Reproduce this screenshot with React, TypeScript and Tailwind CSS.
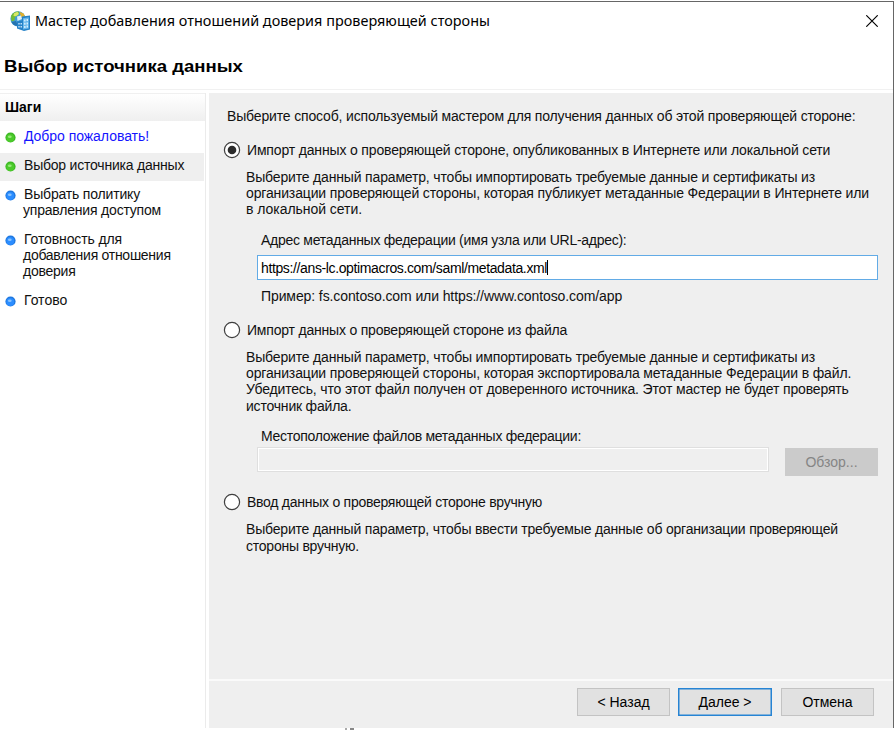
import type { ReactNode } from "react";

function Line({ children, className = "" }: { children: ReactNode; className?: string }) {
  return <div className={`h-4 whitespace-nowrap leading-4 ${className}`}>{children}</div>;
}

function Radio({ checked = false }: { checked?: boolean }) {
  return (
    <svg className="block h-[18px] w-[18px] shrink-0" viewBox="0 0 18 18">
      <circle cx="9" cy="9" r="7.6" fill="#fff" stroke="#3f3f3f" strokeWidth="1.2" />
      {checked && <circle cx="9" cy="9" r="4.3" fill="#2b2b2b" />}
    </svg>
  );
}

function Option({ checked, children, className = "" }: { checked?: boolean; children: ReactNode; className?: string }) {
  return (
    <div className="flex h-[18px] items-center gap-[6px]">
      <Radio checked={checked} />
      <Line className={className}>{children}</Line>
    </div>
  );
}

function Dot({ green = false }: { green?: boolean }) {
  return (
    <svg className="mt-1 block h-[11px] w-[11px] shrink-0" viewBox="0 0 11 11">
      <circle cx="5.5" cy="5.5" r="5.1" fill={green ? "#3cb824" : "#1f78e0"} />
      <circle cx="5.3" cy="6" r="3.9" fill={green ? "#4ccb2b" : "#2b8dff"} />
      <ellipse cx="4.8" cy="4.8" rx="1.9" ry="1.3" fill={green ? "#97e97c" : "#86c2ff"} />
    </svg>
  );
}

function Step({ green, children, className = "" }: { green?: boolean; children: ReactNode; className?: string }) {
  return (
    <div className={`flex gap-2 pl-[5px] ${className}`}>
      <Dot green={green} />
      <div>{children}</div>
    </div>
  );
}

function AppIcon() {
  return (
    <svg className="block h-5 w-5" viewBox="0 0 20 20">
      <circle cx="8" cy="7.8" r="7.6" fill="#3f9bd8" />
      <path d="M1 5C2.5 1.6 6 0 9 .5L8.5 4 5 6 4.5 9.5 1.5 10.5Z" fill="#73bb35" />
      <path d="M4 2.2 7.5.8 9 3 6 5.2 3.5 5Z" fill="#d8e866" />
      <path d="M9.5 .8 13.5 2.5 15.5 6H11Z" fill="#e3b12b" />
      <path d="M7 5.5 11 4.5 12 8 7.5 10Z" fill="#d9f0fb" />
      <path d="M1.5 11 6 10 8 15C5 15 2.8 13.5 1.5 11Z" fill="#2673af" />
      <path d="M12 5.5 20 4.5V18.5L14 20 7 17.5V10.5L12 9.5Z" fill="#2582c8" />
      <path d="M13 7.2 18.8 6.2V17.4L13 18.4Z" fill="#69b8ec" />
      <path d="M14.2 8.5h1.3v2h-1.3zM16.6 8.1h1.3v2h-1.3zM14.2 11.7h1.3v2h-1.3zM16.6 11.4h1.3v2h-1.3zM14.2 15h1.3v2h-1.3zM16.6 14.6h1.3v2h-1.3zM8.4 12h1.2v1.6H8.4zM10.6 12h1.2v1.6h-1.2zM8.4 15h1.2v1.6H8.4zM10.6 15h1.2v1.6h-1.2z" fill="#e4f5ff" />
    </svg>
  );
}

export default function App() {
  return (
    <div className="flex h-[730px] w-[894px] flex-col overflow-hidden bg-white pt-px font-['Liberation_Sans',Arial,sans-serif] text-[14px] text-[#111]">
      <div className="flex h-[727px] flex-col border-t border-r border-[#666]">
        <header className="h-[91px] shrink-0">
          <div className="flex h-[37px] items-center justify-between pr-[15px] pl-[10px]">
            <div className="flex items-center gap-[5px]">
              <AppIcon />
              <span className="whitespace-nowrap font-['Noto_Sans','Open_Sans',sans-serif] text-[14.4px] leading-5 tracking-[0.03px] text-black">
                Мастер добавления отношений доверия проверяющей стороны
              </span>
            </div>
            <svg className="block h-3 w-3" viewBox="0 0 12 12" fill="none" stroke="#000" strokeWidth="1.15">
              <path d="M.3.3 11.7 11.7M11.7.3.3 11.7" />
            </svg>
          </div>
          <div className="h-[51px] border-b border-[#f1f1f1] pt-[18px] pl-1">
            <h1 className="inline-block origin-left scale-x-[1.16] whitespace-nowrap text-[16px] leading-5 font-bold text-black">
              Выбор источника данных
            </h1>
          </div>
        </header>

        <div className="flex min-h-0 flex-1">
          <nav className="w-[206px] shrink-0 border-r border-[#ebebeb]">
            <div className="h-7 border-t border-[#f0f0f0] bg-linear-to-b from-white to-[#efefef] pt-[5px] pl-[5px]">
              <Line className="font-bold text-black">Шаги</Line>
            </div>
            <Step green className="h-[32px] pt-[7px] text-[#1414ff]">
              <Line className="tracking-[-0.04px]">Добро пожаловать!</Line>
            </Step>
            <Step green className="h-[28px] w-[204px] bg-[#efefef] pt-1">
              <Line className="tracking-[-0.21px]">Выбор источника данных</Line>
            </Step>
            <Step className="h-[45px] pt-[5px]">
              <Line className="tracking-[-0.178px]">Выбрать политику</Line>
              <Line className="-ml-px tracking-[-0.198px]">управления доступом</Line>
            </Step>
            <Step className="h-[61px] pt-[5px]">
              <Line className="tracking-[-0.117px]">Готовность для</Line>
              <Line className="-ml-px tracking-[-0.27px]">добавления отношения</Line>
              <Line className="-ml-px tracking-[-0.25px]">доверия</Line>
            </Step>
            <Step className="pt-[5px]">
              <Line>Готово</Line>
            </Step>
          </nav>

          <main className="ml-[3px] flex flex-1 flex-col bg-[#efefef]">
            <div className="h-[586px] shrink-0 pl-[14px]">
              <Line className="mt-[15px] ml-[4px] tracking-[-0.16px]">
                Выберите способ, используемый мастером для получения данных об этой проверяющей стороне:
              </Line>
              <div className="h-[17px]" />
              <Option checked className="tracking-[-0.158px]">
                Импорт данных о проверяющей стороне, опубликованных в Интернете или локальной сети
              </Option>
              <div className="mt-[10px] ml-[23px]">
                <Line className="tracking-[-0.167px]">
                  Выберите данный параметр, чтобы импортировать требуемые данные и сертификаты из
                </Line>
                <Line className="tracking-[-0.141px]">
                  организации проверяющей стороны, которая публикует метаданные Федерации в Интернете или
                </Line>
                <Line className="tracking-[-0.047px]">в локальной сети.</Line>
              </div>
              <Line className="mt-[15px] ml-[38px] tracking-[-0.27px]">
                Адрес метаданных федерации (имя узла или URL-адрес):
              </Line>
              <div className="mt-[7px] ml-[34px] flex h-[25px] w-[621px] items-center border border-[#62abe6] bg-white pl-[3px]">
                <Line className="tracking-[-0.37px] text-black">https://ans-lc.optimacros.com/saml/metadata.xml</Line>
                <span className="h-[15px] w-px bg-black" />
              </div>
              <Line className="mt-[8px] ml-[38px] tracking-[-0.1px]">
                Пример: fs.contoso.com или https://www.contoso.com/app
              </Line>
              <div className="h-[17px]" />
              <Option className="tracking-[-0.2px]">Импорт данных о проверяющей стороне из файла</Option>
              <div className="mt-[10px] ml-[23px]">
                <Line className="tracking-[-0.167px]">
                  Выберите данный параметр, чтобы импортировать требуемые данные и сертификаты из
                </Line>
                <Line className="tracking-[-0.142px]">
                  организации проверяющей стороны, которая экспортировала метаданные Федерации в файл.
                </Line>
                <Line className="tracking-[-0.155px]">
                  Убедитесь, что этот файл получен от доверенного источника. Этот мастер не будет проверять
                </Line>
                <Line className="mt-px tracking-[-0.2px]">источник файла.</Line>
              </div>
              <Line className="mt-[14px] ml-[38px] tracking-[-0.28px]">Местоположение файлов метаданных федерации:</Line>
              <div className="ml-[34px] flex gap-4 pt-[3px]">
                <div className="h-[25px] w-[512px] border border-[#dfdfdf] bg-[#efefef] shadow-[inset_0_0_0_1px_#fff]" />
                <button className="mt-px h-[28px] w-[93px] bg-[#cbcbcb] text-[#858585]" disabled>
                  Обзор...
                </button>
              </div>
              <div className="h-[17px]" />
              <Option className="tracking-[-0.26px]">Ввод данных о проверяющей стороне вручную</Option>
              <div className="mt-[10px] ml-[23px]">
                <Line className="tracking-[-0.187px]">
                  Выберите данный параметр, чтобы ввести требуемые данные об организации проверяющей
                </Line>
                <Line className="mt-px tracking-[-0.236px]">стороны вручную.</Line>
              </div>
            </div>
            <footer className="flex flex-1 justify-end border-t-2 border-[#fafafa] pt-[7px] pr-[19px] text-black">
              <button className="mr-2 h-[28px] w-[93px] border border-[#c3c3c3] bg-[#e1e1e1]">&lt; Назад</button>
              <button className="mr-[9px] h-[28px] w-[94px] border border-[#2684d4] bg-[#e1e1e1] shadow-[inset_0_0_0_0.5px_#2684d4]">
                Далее &gt;
              </button>
              <button className="h-[28px] w-[93px] border border-[#c3c3c3] bg-[#e1e1e1]">Отмена</button>
            </footer>
          </main>
        </div>
      </div>
      <div className="ml-[345px] flex h-0.5 gap-[3px]">
        <span className="w-0.5 bg-[#aaa]" />
        <span className="w-1 bg-[#888]" />
      </div>
    </div>
  );
}
